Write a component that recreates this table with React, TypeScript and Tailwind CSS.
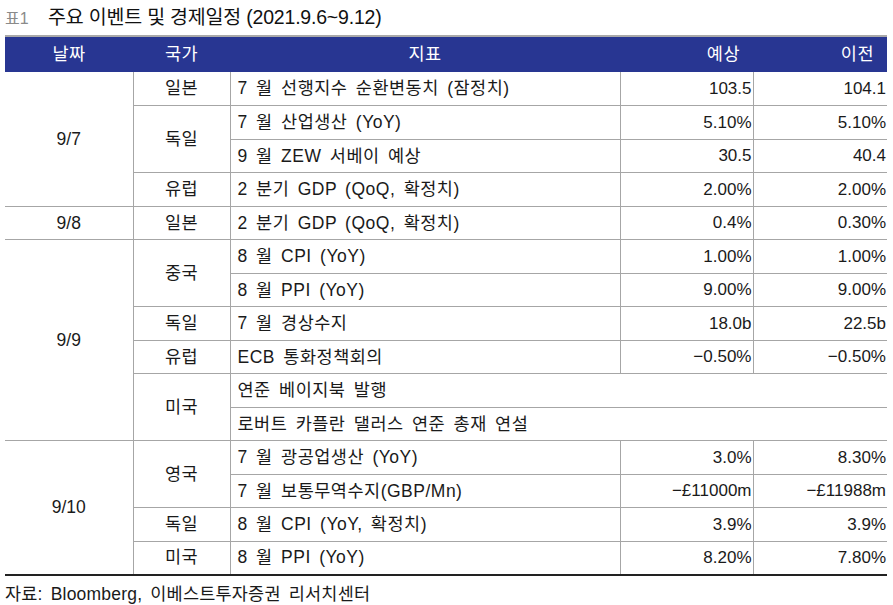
import React from 'react';

type Row = {
  date?: { label: string; span: number };
  country?: { label: string; span: number };
  item: string;
  est?: string;
  prev?: string;
  last?: boolean;
};

const rows: Row[] = [
  { date: { label: '9/7', span: 4 }, country: { label: '일본', span: 1 }, item: '7 월 선행지수 순환변동치 (잠정치)', est: '103.5', prev: '104.1' },
  { country: { label: '독일', span: 2 }, item: '7 월 산업생산 (YoY)', est: '5.10%', prev: '5.10%' },
  { item: '9 월 ZEW 서베이 예상', est: '30.5', prev: '40.4' },
  { country: { label: '유럽', span: 1 }, item: '2 분기 GDP (QoQ, 확정치)', est: '2.00%', prev: '2.00%' },
  { date: { label: '9/8', span: 1 }, country: { label: '일본', span: 1 }, item: '2 분기 GDP (QoQ, 확정치)', est: '0.4%', prev: '0.30%' },
  { date: { label: '9/9', span: 6 }, country: { label: '중국', span: 2 }, item: '8 월 CPI (YoY)', est: '1.00%', prev: '1.00%' },
  { item: '8 월 PPI (YoY)', est: '9.00%', prev: '9.00%' },
  { country: { label: '독일', span: 1 }, item: '7 월 경상수지', est: '18.0b', prev: '22.5b' },
  { country: { label: '유럽', span: 1 }, item: 'ECB 통화정책회의', est: '−0.50%', prev: '−0.50%' },
  { country: { label: '미국', span: 2 }, item: '연준 베이지북 발행' },
  { item: '로버트 카플란 댈러스 연준 총재 연설' },
  { date: { label: '9/10', span: 4 }, country: { label: '영국', span: 2 }, item: '7 월 광공업생산 (YoY)', est: '3.0%', prev: '8.30%' },
  { item: '7 월 보통무역수지(GBP/Mn)', est: '−£11000m', prev: '−£11988m' },
  { country: { label: '독일', span: 1 }, item: '8 월 CPI (YoY, 확정치)', est: '3.9%', prev: '3.9%' },
  { country: { label: '미국', span: 1 }, item: '8 월 PPI (YoY)', est: '8.20%', prev: '7.80%', last: true },
];

const font = { fontFamily: '"Liberation Sans", "Noto Sans CJK KR", sans-serif' };

export default function App() {
  return (
    <div className="w-[893px] h-[605px] bg-white text-[#1a1a1a] px-[5px] pt-[3px]" style={font}>
      <div className="flex items-baseline h-[32px]">
        <span className="text-[16px] text-[#8a8a8a] w-[43px]">표1</span>
        <span className="text-[19.5px] text-[#111] tracking-[-0.2px]">주요 이벤트 및 경제일정 (2021.9.6~9.12)</span>
      </div>
      <table className="w-[882px] border-collapse table-fixed text-[17.5px] tracking-[0.5px] [word-spacing:3px]">
        <colgroup>
          <col className="w-[128px]" />
          <col className="w-[97px]" />
          <col className="w-[390px]" />
          <col className="w-[133px]" />
          <col className="w-[134px]" />
        </colgroup>
        <thead>
          <tr className="h-[36px] bg-[#283692] text-white border-t-2 border-[#a9a9a9]">
            <th className="font-normal text-center">날짜</th>
            <th className="font-normal text-center">국가</th>
            <th className="font-normal text-center">지표</th>
            <th className="font-normal text-right pr-[13px]">예상</th>
            <th className="font-normal text-right pr-[13px]">이전</th>
          </tr>
        </thead>
        <tbody>
          {rows.map((r, i) => {
            const line = r.last ? 'border-b-2 border-b-[#222]' : 'border-b border-b-[#a6a6a6]';
            const spanLast = (n: number) => i + n === rows.length;
            return (
              <tr key={i} className="h-[33.5px]">
                {r.date && (
                  <td
                    rowSpan={r.date.span}
                    className={`text-center tracking-normal ${spanLast(r.date.span) ? 'border-b-2 border-b-[#222]' : 'border-b border-b-[#a6a6a6]'}`}
                  >
                    {r.date.label}
                  </td>
                )}
                {r.country && (
                  <td
                    rowSpan={r.country.span}
                    className={`text-center border-l border-l-[#a6a6a6] ${spanLast(r.country.span) ? 'border-b-2 border-b-[#222]' : 'border-b border-b-[#a6a6a6]'}`}
                  >
                    {r.country.label}
                  </td>
                )}
                {r.est === undefined ? (
                  <td colSpan={3} className={`pl-[7px] border-l border-l-[#a6a6a6] ${line}`}>{r.item}</td>
                ) : (
                  <>
                    <td className={`pl-[7px] border-l border-l-[#a6a6a6] whitespace-nowrap ${line}`}>{r.item}</td>
                    <td className={`text-right pr-[1px] text-[17px] tracking-normal border-l border-l-[#a6a6a6] ${line}`}>{r.est}</td>
                    <td className={`text-right pr-[1px] text-[17px] tracking-normal border-l border-l-[#a6a6a6] ${line}`}>{r.prev}</td>
                  </>
                )}
              </tr>
            );
          })}
        </tbody>
      </table>
      <div className="text-[17.5px] mt-[5px] tracking-[0.2px] [word-spacing:3px]">자료: Bloomberg, 이베스트투자증권 리서치센터</div>
    </div>
  );
}
